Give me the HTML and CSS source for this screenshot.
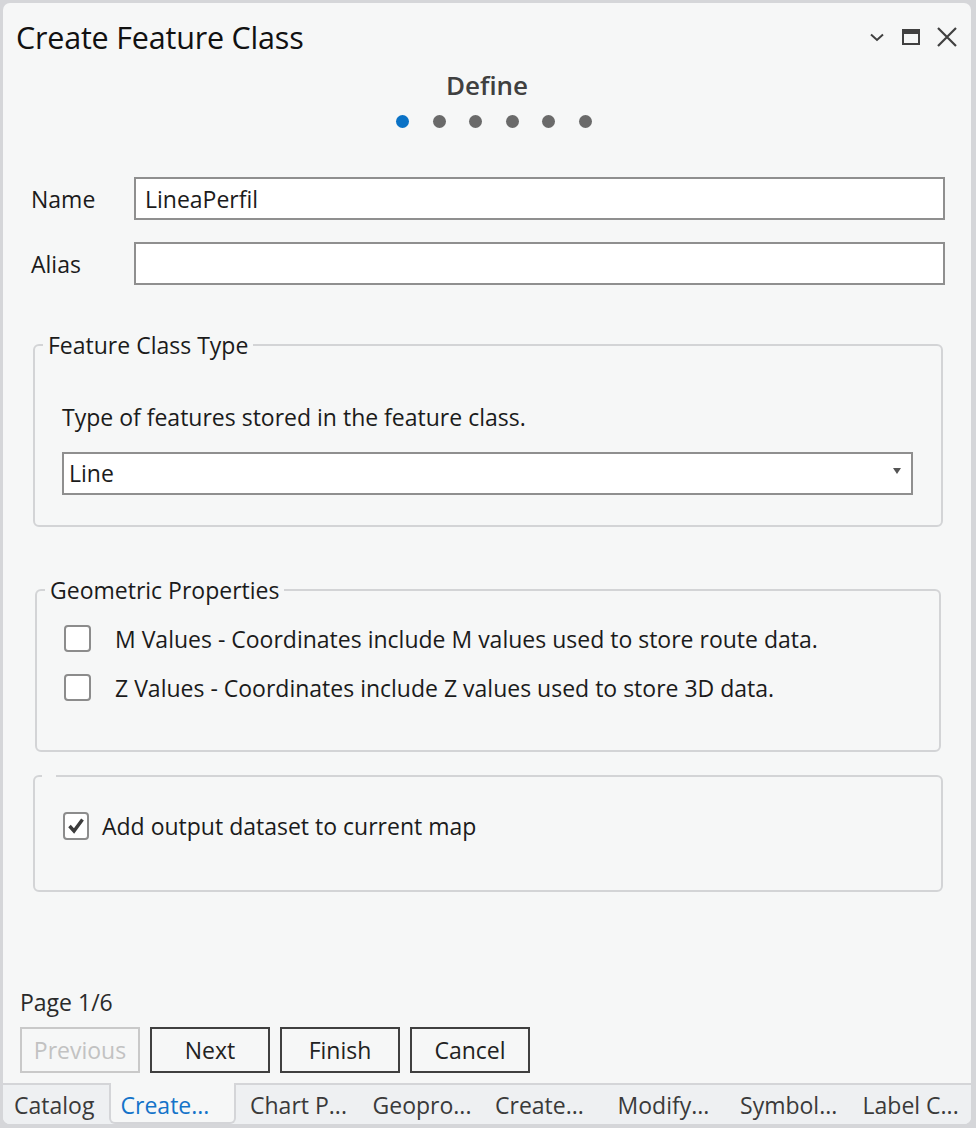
FILE: index.html
```html
<!DOCTYPE html>
<html>
<head>
<meta charset="utf-8">
<link rel="stylesheet" href="styles.css">
</head>
<body>
<div class="window">
  <div class="titlebar">
    <div class="title">Create Feature Class</div>
    <div class="winctl">
      <svg class="ic" width="20" height="20" viewBox="0 0 20 20"><path d="M4 7.5 L10 13 L16 7.5" fill="none" stroke="#404040" stroke-width="2"/></svg>
      <svg class="ic" width="20" height="20" viewBox="0 0 20 20"><rect x="2" y="3" width="16" height="14" fill="none" stroke="#404040" stroke-width="2"/><rect x="2" y="3" width="16" height="4" fill="#404040"/></svg>
      <svg class="ic" width="24" height="24" viewBox="0 0 24 24"><path d="M3 3 L21 21 M21 3 L3 21" fill="none" stroke="#404040" stroke-width="2.2"/></svg>
    </div>
  </div>
  <div class="step">Define</div>
  <div class="dots">
    <span class="dot active"></span><span class="dot"></span><span class="dot"></span><span class="dot"></span><span class="dot"></span><span class="dot"></span>
  </div>

  <div class="content">
    <div class="row">
      <label class="lbl">Name</label>
      <div class="input">LineaPerfil</div>
    </div>
    <div class="row row2">
      <label class="lbl">Alias</label>
      <div class="input"></div>
    </div>

    <fieldset class="group g1">
      <legend>Feature Class Type</legend>
      <div class="desc">Type of features stored in the feature class.</div>
      <div class="select"><span>Line</span><svg width="10" height="8" viewBox="0 0 10 8"><path d="M1 1 L9 1 L5 7 Z" fill="#555"/></svg></div>
    </fieldset>

    <fieldset class="group g2">
      <legend>Geometric Properties</legend>
      <div class="chk"><span class="box"></span><span>M Values - Coordinates include M values used to store route data.</span></div>
      <div class="chk"><span class="box"></span><span>Z Values - Coordinates include Z values used to store 3D data.</span></div>
    </fieldset>

    <fieldset class="group g3">
      <legend class="empty"></legend>
      <div class="chk3"><span class="box3"><svg width="20" height="20" viewBox="0 0 20 20"><path d="M3.5 10 L8 15 L16.5 3.5" fill="none" stroke="#3c3c3c" stroke-width="3.4"/></svg></span><span>Add output dataset to current map</span></div>
    </fieldset>
  </div>

  <div class="footer">
    <div class="page">Page 1/6</div>
    <div class="buttons">
      <button class="btn disabled">Previous</button>
      <button class="btn">Next</button>
      <button class="btn">Finish</button>
      <button class="btn">Cancel</button>
    </div>
  </div>

  <div class="tabs">
    <div class="tab first">Catalog</div>
    <div class="tab active">Create...</div>
    <div class="tab">Chart P...</div>
    <div class="tab">Geopro...</div>
    <div class="tab">Create...</div>
    <div class="tab">Modify...</div>
    <div class="tab">Symbol...</div>
    <div class="tab">Label C...</div>
  </div>
</div>
</body>
</html>
```

FILE: styles.css
```css
* { box-sizing: border-box; }
html, body { margin: 0; padding: 0; }
body {
  background: #d5d6d9;
  width: 976px;
  height: 1128px;
  font-family: "Open Sans", "Noto Sans", sans-serif;
  color: #1b1b1b;
  padding: 3px 5px 4px 3px;
}
.window {
  background: #f6f7f7;
  height: 1121px;
  border-radius: 7px;
  display: flex;
  flex-direction: column;
  overflow: hidden;
}
.titlebar {
  height: 68px;
  display: flex;
  align-items: center;
  justify-content: space-between;
  padding: 0 12px 0 13px;
}
.title {
  font-size: 30.5px;
  letter-spacing: -0.2px;
  color: #111;
}
.winctl { display: flex; align-items: center; gap: 14px; }
.ic { display: block; }
.step {
  text-align: center;
  font-size: 26px;
  font-weight: 600;
  line-height: 28px;
  color: #404040;
}
.dots {
  display: flex;
  justify-content: center;
  gap: 23.5px;
  margin-top: 16px;
  padding-left: 14px;
}
.dot {
  width: 13px; height: 13px; border-radius: 50%;
  background: #6a6a6a;
}
.dot.active { background: #0a72c6; }

.content { padding: 0 26px 0 28px; margin-top: 49px; }
.row { display: flex; align-items: center; }
.row2 { margin-top: 22px; }
.lbl { width: 103px; font-size: 23px; }
.input {
  flex: 1;
  height: 43px;
  border: 2px solid #8f8f8f;
  background: #fff;
  font-size: 23px;
  padding: 0 9px;
  display: flex; align-items: center;
}

.group {
  border: 2px solid #d3d4d6;
  border-radius: 6px;
  margin: 0;
  padding: 0;
  min-width: 0;
}
.group legend {
  font-size: 23px;
  padding: 0 5px;
  margin-left: -19px;
  line-height: 28px;
}
.g1 { margin: 46px 0 0 2px; width: 910px; height: 196px; padding: 44px 28px 0 27px; }
.desc { font-size: 23px; line-height: 28px; }
.select {
  margin-top: 21px;
  height: 43px;
  border: 2px solid #8f8f8f;
  background: #fff;
  font-size: 23px;
  display: flex; align-items: center; justify-content: space-between;
  padding: 0 9px 2px 5px;
}
.select svg { margin-bottom: 4px; }

.g2 { margin: 49px 0 0 4px; width: 906px; height: 176px; padding: 21px 10px 0 27px; }
.chk { display: flex; align-items: center; font-size: 23px; height: 27px; margin-bottom: 22px; white-space: nowrap; }
.box {
  width: 27px; height: 27px;
  border: 2px solid #8c8c8c; border-radius: 4px; background: #fff;
  margin-right: 24px; flex: none;
}
.g3 { margin: 10px 0 0 2px; width: 910px; height: 130px; padding: 20px 20px 0 28px; }
.group legend.empty { padding: 0; width: 14px; height: 28px; margin-left: -21px; }
.chk3 { display: flex; align-items: center; font-size: 23px; }
.box3 {
  width: 26px; height: 28px;
  border: 2px solid #8c8c8c; border-radius: 4px; background: #fff;
  margin-right: 13px; display: flex; align-items: center; justify-content: center;
}

.footer { margin-top: auto; padding: 0 0 10px 17px; }
.page { font-size: 23px; color: #2a2a2a; line-height: 28px; }
.buttons { display: flex; gap: 10px; margin-top: 11px; }
.btn {
  width: 120px; height: 46px;
  border: 2px solid #404040;
  background: #f6f7f7;
  font-family: inherit;
  font-size: 23px;
  color: #222;
  padding: 0;
}
.btn.disabled { border-color: #c9c9c9; color: #c2c2c2; }

.tabs {
  height: 41px;
  background: #eef0f2;
  border-top: 2px solid #d4d5d8;
  display: flex;
  align-items: stretch;
  font-size: 23px;
  color: #3a3a3a;
}
.tab {
  width: 123px;
  padding-left: 14px;
  display: flex; align-items: center;
  white-space: nowrap;
}
.tab.first { width: 106px; padding-left: 11px; }
.tab.active {
  width: 128px;
  margin-top: -2px;
  padding-top: 4px;
  background: #f6f7f7;
  color: #1473c9;
  border: 2px solid #d4d5d8;
  border-top: none;
  border-radius: 0 0 6px 6px;
  padding-left: 10px;
}
```
